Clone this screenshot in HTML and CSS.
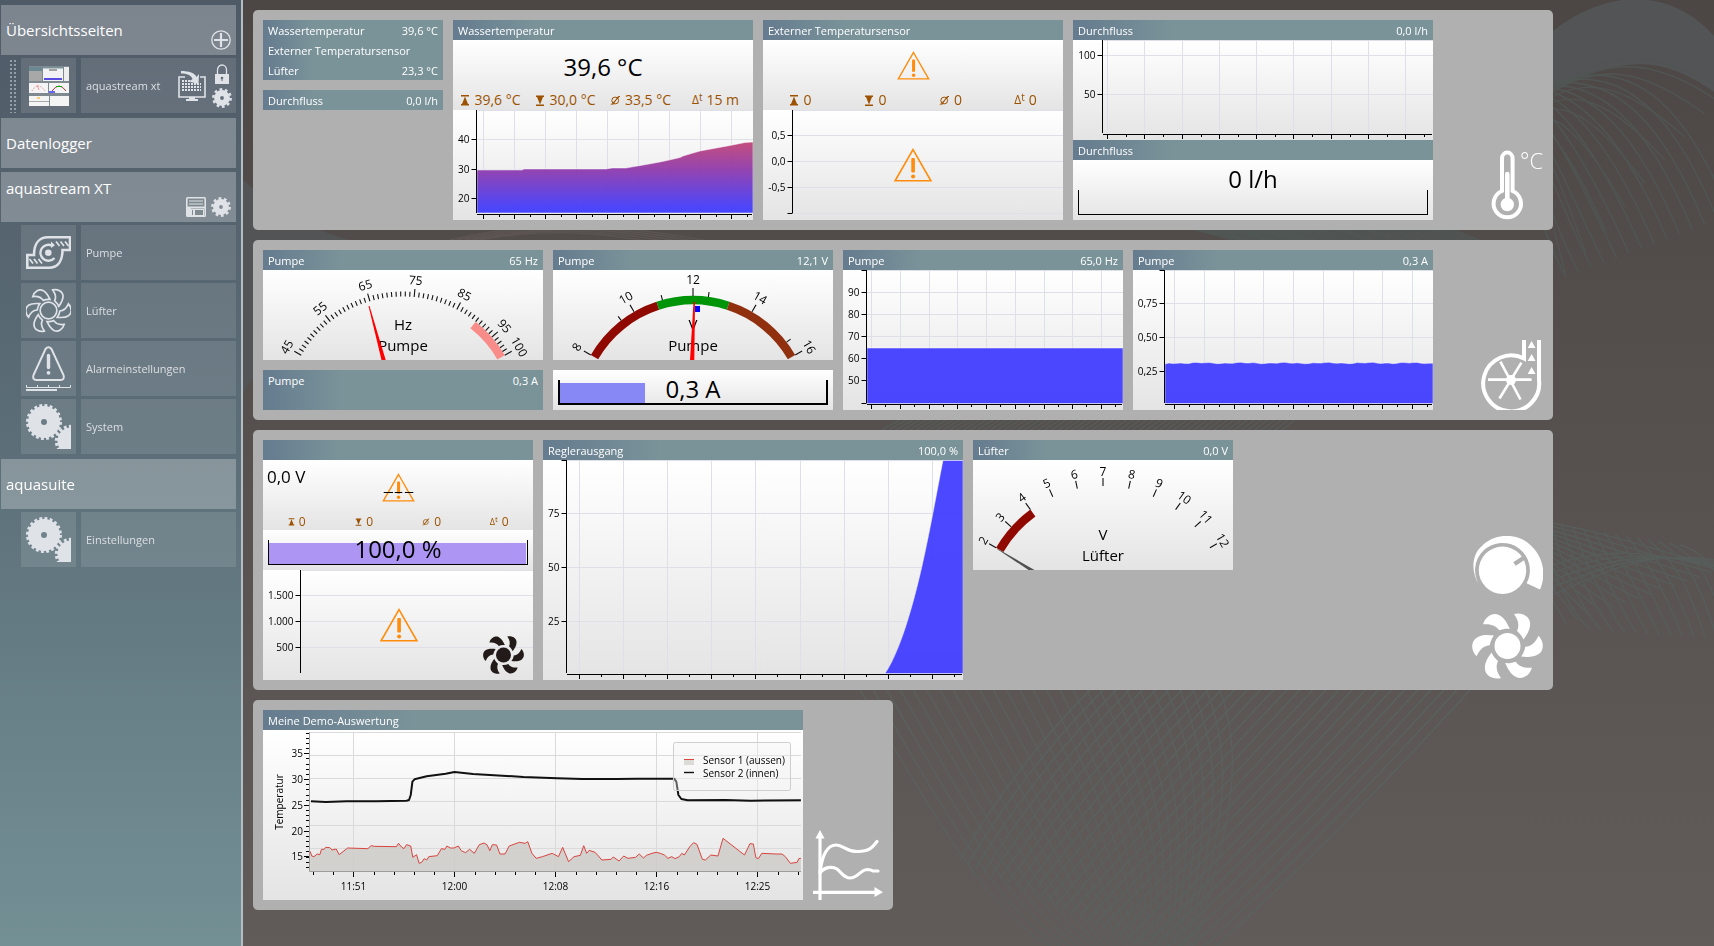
FILE: index.html
```html
<!DOCTYPE html>
<html lang="de">
<head>
<meta charset="utf-8">
<title>aquasuite</title>
<link rel="stylesheet" href="styles.css">
</head>
<body>
<svg class="backdrop" id="backdrop" viewBox="0 0 1714 946" preserveAspectRatio="xMidYMid slice" aria-hidden="true"></svg>

<svg class="symbols" aria-hidden="true">
  <symbol id="warn" viewBox="0 0 39 34">
    <path d="M19.5 1.6 37.4 32.8H1.6Z" fill="none" stroke="#ff8c0a" stroke-width="1.6"/>
    <rect x="17.8" y="10" width="3.6" height="14.5" rx="1" fill="#ff8c0a"/>
    <circle cx="19.6" cy="28.6" r="2" fill="#ff8c0a"/>
  </symbol>
  <symbol id="max" viewBox="0 0 10 11"><path d="M1 0h8v1.6H1ZM5 1.5 8 9H9v1.5H1V9H2Z" fill="#9c5200"/></symbol>
  <symbol id="min" viewBox="0 0 10 11"><path d="M1 11h8V9.4H1ZM5 9.5 8 2H9V.5H1V2H2Z" fill="#9c5200"/></symbol>
  <symbol id="avg" viewBox="0 0 11 11"><g fill="none" stroke="#9c5200"><circle cx="5.2" cy="5.5" r="3.4"/><path d="M.8 9.8 10 1M2.6 10 8.6 1"/></g></symbol>
  <symbol id="fan-solid" viewBox="-35.500 -34 71 68">
    <circle r="13"/>
    <g id="blades">
      <path id="blade" d="M6.500-32C14-34 22-30 22.600-23C23-16 19-11 16-6.500C14.500-10 12-13 9.500-15C12-20 11-26 6.500-32Z"/>
      <use href="#blade" transform="rotate(60)"/><use href="#blade" transform="rotate(120)"/><use href="#blade" transform="rotate(180)"/><use href="#blade" transform="rotate(240)"/><use href="#blade" transform="rotate(300)"/>
    </g>
  </symbol>
  <symbol id="gear" viewBox="0 0 20 20">
    <circle cx="10" cy="10" r="4.900" fill="none" stroke="#dfe3e8" stroke-width="6"/>
    <circle cx="10" cy="10" r="8.600" fill="none" stroke="#dfe3e8" stroke-width="2.600" stroke-dasharray="2.700 2.704"/>
  </symbol>
  <symbol id="gears" viewBox="0 0 45 45">
    <g fill="none" stroke="#dfe3e8">
      <circle cx="18" cy="18" r="9.500" stroke-width="13"/>
      <circle cx="18" cy="18" r="16.500" stroke-width="3" stroke-dasharray="2.880 2.303"/>
      <circle cx="45" cy="37" r="6.800" stroke-width="13.600"/>
      <circle cx="45" cy="37" r="14.600" stroke-width="3.200" stroke-dasharray="2.800 2.296"/>
    </g>
  </symbol>
</svg>

<div class="app">
  <nav class="sidebar" aria-label="Navigation">
    <section class="group">
      <h2 class="group-head"><a href="#seiten">Übersichtsseiten</a>
        <span class="tools"><button type="button" aria-label="Seite hinzufügen"><svg viewBox="0 0 20 20" width="20" height="20"><g fill="none" stroke="#dfe3e8"><circle cx="10" cy="10" r="9.200" stroke-width="1.300"/><path d="M10 3v14M3 10h14" stroke-width="2.200"/></g></svg></button></span>
      </h2>
      <div class="entry">
        <span class="grip"></span>
        <a class="entry-icon" href="#xt" aria-label="Vorschau aquastream xt">
          <svg viewBox="0 0 40 40" width="40" height="40">
            <rect width="40" height="40" fill="#7f8a90"/>
            <rect y="1" width="13" height="14" fill="#a8a8a8"/><rect y="1" width="13" height="4" fill="#6c8890"/>
            <rect x="14" y="1" width="20" height="14" fill="#f2f2f4"/><rect x="14" y="1" width="20" height="1.500" fill="#7a9399"/><rect x="15" y="12" width="18" height="2" fill="#5b4ce0"/><path d="M20 4h8" stroke="#555"/>
            <rect x="35" y="1" width="5" height="14" fill="#eee"/>
            <rect y="17" width="19" height="10" fill="#f4f4f4"/><path d="M3 25Q9 15 16 25" stroke="#d88" fill="none" stroke-dasharray="1 1"/><path d="M10 24 8 19" stroke="#e99"/>
            <rect x="20" y="17" width="20" height="10" fill="#f4f4f4"/><path d="M23 25Q30 15 37 25" stroke="#a33" fill="none"/><path d="M27 20.500h6" stroke="#1a1"/><rect x="20" y="25" width="6" height="2" fill="#66f"/>
            <rect y="30" width="20" height="10" fill="#f4f4f4"/><rect x="21" y="30" width="19" height="10" fill="#f4f4f4"/><path d="M0 35.500h20" stroke="#aaa"/><path d="M8 32h3" stroke="#fa0"/>
          </svg></a>
        <div class="entry-label split">
          <a href="#xt">aquastream xt</a>
          <button type="button" aria-label="Auf Desktop anzeigen"><svg viewBox="0 0 28 30" width="28" height="30"><path d="M7 6H1v20h26V6h-5" fill="none" stroke="#dfe3e8" stroke-width="1.600"/><path d="M4 10h13M4 13h19M4 16h19M4 19h19" stroke="#dfe3e8" stroke-width="2" stroke-dasharray="2 1"/><path d="M11 26h6v2h3v2H8v-2h3Z" fill="#dfe3e8"/><path d="M3 0C11 0 17 2 18.500 6L21 3 20.500 13 11 10.500 14.500 8C13 4 9 2.500 3 2.500Z" fill="#dfe3e8"/></svg></button>
          <span class="stack">
            <button type="button" aria-label="Sperren"><svg viewBox="0 0 14 20" width="14" height="20"><path d="M2.500 10V6a4.500 5 0 0 1 9 0v4" fill="none" stroke="#dfe3e8" stroke-width="1.300"/><path d="M0 10h14v10H0Z" fill="#dfe3e8"/><circle cx="7" cy="14" r="1.300" fill="#646e78"/><path d="M7 14v3" stroke="#646e78"/></svg></button>
            <button type="button" aria-label="Seite einstellen"><svg width="20" height="20"><use href="#gear"/></svg></button>
          </span>
        </div>
      </div>
    </section>
    <section class="group">
      <h2 class="group-head"><a href="#logger">Datenlogger</a></h2>
    </section>
    <section class="group">
      <h2 class="group-head top"><a href="#aquastream">aquastream XT</a>
        <span class="tools">
          <button type="button" aria-label="Speichern"><svg viewBox="0 0 20 20" width="20" height="20"><rect x=".8" y=".8" width="18.400" height="18.400" rx=".8" fill="#7f8990" stroke="#dfe3e8" stroke-width="1.600"/><path d="M3 4h14M3 7h14" stroke="#dfe3e8"/><path d="M1 9.500h18v2H1ZM1 11h4v8H1Z" fill="#dfe3e8"/><rect x="5.500" y="12.500" width="12" height="6" fill="none" stroke="#dfe3e8"/><path d="M8 13v5" stroke="#dfe3e8" stroke-width="2"/></svg></button>
          <button type="button" aria-label="Gerät einstellen"><svg width="20" height="20"><use href="#gear"/></svg></button>
        </span>
      </h2>
      <div class="entry">
        <span class="entry-icon"><svg viewBox="0 0 45 33" width="45" height="33"><g fill="none" stroke="#dfe3e8"><path d="M44 1.300H22C13 1.300 8 8 8 19H1.300V31.700H23C32 31.700 36.500 25 36.500 14H44Z" stroke-width="2.600"/><path d="M28.500 22A8 8 0 1 1 26 9.600" stroke-width="2.300"/><path d="M30 5.500 33.500 10M34.500 5.500 38 10M39 5.500 42.500 10M3.500 23 7 27.500M8 23 11.500 27.500M12.500 23 16 27.500" stroke-width="1.700"/></g><circle cx="22.300" cy="16.700" r="3.300" fill="#dfe3e8"/><path d="M25 5.500 29 9.200 25 12Z" fill="#dfe3e8"/></svg></span>
        <a class="entry-label" href="#pumpe">Pumpe</a>
      </div>
      <div class="entry">
        <span class="entry-icon"><svg viewBox="-35 -35 70 70" width="45" height="45"><g fill="none" stroke="#dfe3e8" stroke-width="2.600"><circle r="13"/><use href="#blades"/></g></svg></span>
        <a class="entry-label" href="#luefter">Lüfter</a>
      </div>
      <div class="entry">
        <span class="entry-icon"><svg viewBox="0 0 45 45" width="45" height="45"><path d="M19.500 3Q22.500-.5 25.500 3L37.500 29Q39 34 34.500 34H10.500Q6 34 7.500 29Z" fill="none" stroke="#dfe3e8" stroke-width="2"/><path d="M22.500 9.500v12" stroke="#dfe3e8" stroke-width="3.400" stroke-linecap="round"/><circle cx="22.500" cy="26.800" r="1.900" fill="#dfe3e8"/><path d="M.5 39v2.500h44V39M11.500 39v2.500M22.500 39v2.500M33.500 39v2.500" fill="none" stroke="#dfe3e8"/><path d="M0 44h31" stroke="#dfe3e8" stroke-width="2"/></svg></span>
        <a class="entry-label" href="#alarm">Alarmeinstellungen</a>
      </div>
      <div class="entry">
        <span class="entry-icon"><svg width="45" height="45"><use href="#gears"/></svg></span>
        <a class="entry-label" href="#system">System</a>
      </div>
    </section>
    <section class="group">
      <h2 class="group-head"><a href="#aquasuite">aquasuite</a></h2>
      <div class="entry">
        <span class="entry-icon"><svg width="45" height="45"><use href="#gears"/></svg></span>
        <a class="entry-label" href="#einstellungen">Einstellungen</a>
      </div>
    </section>
  </nav>

  <main class="board">
    <section class="panel">
      <div class="tile w180 spaced">
        <dl class="list">
          <div><dt>Wassertemperatur</dt><dd>39,6 °C</dd></div>
          <div><dt>Externer Temperatursensor</dt><dd></dd></div>
          <div><dt>Lüfter</dt><dd>23,3 °C</dd></div>
        </dl>
        <dl class="list"><div><dt>Durchfluss</dt><dd>0,0 l/h</dd></div></dl>
      </div>
      <div class="tile w300">
        <h3 class="bar-head"><span>Wassertemperatur</span></h3>
        <div class="reading">
          <p class="big">39,6 °C</p>
          <ul class="stats">
            <li><svg width="10" height="11"><use href="#max"/></svg>39,6 °C</li>
            <li><svg width="10" height="11"><use href="#min"/></svg>30,0 °C</li>
            <li><svg width="11" height="11"><use href="#avg"/></svg>33,5 °C</li>
            <li><span class="delta">Δ<sup>t</sup></span>15 m</li>
          </ul>
        </div>
        <svg class="plot" id="water" viewBox="0 0 300 110"></svg>
      </div>
      <div class="tile w300">
        <h3 class="bar-head"><span>Externer Temperatursensor</span></h3>
        <div class="reading">
          <svg class="alert" width="33" height="29"><use href="#warn"/></svg>
          <ul class="stats">
            <li><svg width="10" height="11"><use href="#max"/></svg>0</li>
            <li><svg width="10" height="11"><use href="#min"/></svg>0</li>
            <li><svg width="11" height="11"><use href="#avg"/></svg>0</li>
            <li><span class="delta">Δ<sup>t</sup></span>0</li>
          </ul>
        </div>
        <svg class="plot" id="external" viewBox="0 0 300 110"></svg>
      </div>
      <div class="tile w360">
        <h3 class="bar-head"><span>Durchfluss</span><span>0,0 l/h</span></h3>
        <svg class="plot" id="flow" viewBox="0 0 360 100"></svg>
        <h3 class="bar-head"><span>Durchfluss</span></h3>
        <div class="meter tall"><div class="track"></div><p class="big">0 l/h</p></div>
      </div>
      <div class="badges">
        <svg class="loose" viewBox="0 0 70 70" width="70" height="70"><g fill="none" stroke="#fff"><path d="M29 41V8.500a5.300 6 0 0 1 10.600 0V41A13.700 13.700 0 1 1 29 41Z" stroke-width="4"/><path d="M34.300 54V24" stroke-width="4.600" stroke-linecap="round"/></g><circle cx="34.300" cy="54.500" r="6.700" fill="#fff"/><text class="unit" x="47" y="19">°C</text></svg>
      </div>
    </section>

    <section class="panel">
      <div class="tile w280 spaced">
        <div>
          <h3 class="bar-head"><span>Pumpe</span><span>65 Hz</span></h3>
          <svg class="plot" id="gauge-hz" viewBox="0 0 280 90"></svg>
        </div>
        <dl class="list tall"><div><dt>Pumpe</dt><dd>0,3 A</dd></div></dl>
      </div>
      <div class="tile w280 spaced">
        <div>
          <h3 class="bar-head"><span>Pumpe</span><span>12,1 V</span></h3>
          <svg class="plot" id="gauge-v" viewBox="0 0 280 90"></svg>
        </div>
        <div class="meter thick"><div class="track"><div class="fill blue" style="width:32%"></div></div><p class="big">0,3 A</p></div>
      </div>
      <div class="tile w280">
        <h3 class="bar-head"><span>Pumpe</span><span>65,0 Hz</span></h3>
        <svg class="plot" id="pump-hz" viewBox="0 0 280 140"></svg>
      </div>
      <div class="tile w300">
        <h3 class="bar-head"><span>Pumpe</span><span>0,3 A</span></h3>
        <svg class="plot" id="pump-a" viewBox="0 0 300 140"></svg>
      </div>
      <div class="badges">
        <svg viewBox="0 0 70 70" width="70" height="70"><g fill="none" stroke="#fff"><path d="M51 0V18.500A28 28 0 1 0 66 40V0" stroke-width="4"/><path d="M15 39.600H58.600M27.400 21.600 47.500 59.500M48.400 22.600 26.500 58.500" stroke-width="2.600"/></g><circle cx="38" cy="40" r="5" fill="#fff"/><path d="M58.600 1 62.500 8H54.700ZM58.600 14 62.500 21H54.700ZM58.600 27 62.500 34H54.700Z" fill="#fff"/></svg>
      </div>
    </section>

    <section class="panel">
      <div class="tile w270">
        <h3 class="bar-head"></h3>
        <div class="reading small">
          <p class="corner">0,0 V</p>
          <svg class="alert" viewBox="0 0 39 34" width="33" height="29"><use href="#warn"/><path d="M2 23h11M15 23h9M27 23h10" stroke="#000" stroke-width="1.200"/></svg>
          <ul class="stats">
            <li><svg width="7" height="8"><use href="#max"/></svg>0</li>
            <li><svg width="7" height="8"><use href="#min"/></svg>0</li>
            <li><svg width="8" height="8"><use href="#avg"/></svg>0</li>
            <li><span class="delta">Δ<sup>t</sup></span>0</li>
          </ul>
        </div>
        <div class="meter"><div class="track"><div class="fill violet" style="width:99.5%"></div></div><p class="big">100,0 %</p></div>
        <svg class="plot" id="fan" viewBox="0 0 270 110"></svg>
      </div>
      <div class="tile w420">
        <h3 class="bar-head"><span>Reglerausgang</span><span>100,0 %</span></h3>
        <svg class="plot" id="control" viewBox="0 0 420 220"></svg>
      </div>
      <div class="tile w260">
        <h3 class="bar-head"><span>Lüfter</span><span>0,0 V</span></h3>
        <svg class="plot" id="gauge-fan" viewBox="0 0 260 110"></svg>
      </div>
      <div class="badges">
        <svg viewBox="0 0 70 58" width="70" height="58"><path d="M7 50C-3 36-1 18 9 10C21-3 43-3 55 7C70 19 74 37 67 53.500L53.600 47.300A27.400 27.400 0 1 0 7 50Z" fill="#fff"/><circle cx="29.500" cy="34.300" r="23.700" fill="#fff"/><path d="M41.500 28 52 21" stroke="#b0b0b0" stroke-width="4.400"/></svg>
        <svg width="71" height="68" fill="#fff"><use href="#fan-solid"/></svg>
      </div>
    </section>

    <section class="panel narrow">
      <div class="tile w540">
        <h3 class="bar-head"><span>Meine Demo-Auswertung</span></h3>
        <svg class="plot" id="demo" viewBox="0 0 540 170"></svg>
      </div>
      <div class="badges">
        <svg viewBox="0 0 70 70" width="70" height="70"><g fill="none" stroke="#fff" stroke-width="3.200"><path d="M7 6V70M0 62.300H64"/><path d="M7 42C9 27 13 15 23 15C31 15 33 22 45 21.500C56 21.500 59 18 64 11.500M7 43C11 37 19 36 24 39C30 44 31 48 37 48C45 48 47 40 54 39.500Q58 39.500 60 41H65" stroke-linecap="round"/></g><path d="M7 0 11.600 8.500H2.400ZM70 62.300 61.500 57V67Z" fill="#fff"/></svg>
      </div>
    </section>
  </main>
</div>
<script src="script.js"></script>
</body>
</html>
```
FILE: styles.css
```css
* { box-sizing: border-box; }

body {
  margin: 0;
  min-height: 100vh;
  background: linear-gradient(#4c4745, #615c5a) fixed;
  font-family: "Open Sans", "Noto Sans", sans-serif;
  font-size: 11px;
  color: #000;
}

h2, h3, p, ul, dl, dd { margin: 0; padding: 0; font-weight: 400; }
ul { list-style: none; }
a { color: inherit; text-decoration: none; }
svg { display: block; }
button { display: block; padding: 0; border: 0; background: none; cursor: pointer; }

.symbols { position: absolute; width: 0; height: 0; }
.backdrop { position: fixed; inset: 0; width: 100%; height: 100%; z-index: -1; }

.app { display: flex; min-height: 100vh; }

/* Sidebar */
.sidebar {
  flex: 0 0 243px;
  padding: 5px 5px 0 1px;
  border-right: 2px solid #b4bdc3;
  background: linear-gradient(#4f5a67, #5b6d77 45%, #739095);
}
.group + .group { margin-top: 4px; }
.entry:last-child { margin-bottom: 5px; }
.group-head {
  display: flex;
  justify-content: space-between;
  align-items: center;
  height: 50px;
  padding: 0 5px;
  background: rgba(255, 255, 255, .26);
  color: #fff;
  font-size: 15px;
  line-height: 22px;
}
.group-head.top { align-items: flex-start; padding-top: 5px; }
.tools { display: flex; gap: 5px; align-self: flex-end; padding-bottom: 5px; }
.entry {
  display: flex;
  gap: 5px;
  margin-top: 3px;
  padding-left: 20px;
  position: relative;
}
.entry-icon {
  display: flex;
  flex: 0 0 55px;
  height: 55px;
  align-items: center;
  justify-content: center;
  background: rgba(255, 255, 255, .11);
}
.entry-label {
  display: flex;
  flex: 1;
  align-items: center;
  padding: 0 4px 0 5px;
  background: rgba(255, 255, 255, .11);
  color: #dcdfe2;
}
.split { gap: 6px; }
.split a { flex: 1; }
.stack { display: flex; flex-direction: column; align-items: center; gap: 4px; }
.grip {
  position: absolute;
  left: 7px;
  top: 2px;
  bottom: 0;
  width: 8px;
  background: conic-gradient(from 90deg at 2px 2px, transparent 270deg, #93a0a7 0) 0 0 / 4px 4px;
}

/* Board */
.board {
  flex: 1;
  display: flex;
  flex-direction: column;
  align-items: flex-start;
  gap: 10px;
  padding: 10px;
  min-width: 0;
}
.panel {
  display: flex;
  align-items: flex-start;
  gap: 10px;
  width: 100%;
  max-width: 1300px;
  padding: 10px;
  border-radius: 5px;
  background: #b0b0b0;
}
.panel.narrow { max-width: 640px; }
.badges {
  display: flex;
  flex-direction: column;
  align-items: flex-end;
  gap: 18px;
  align-self: flex-end;
  margin-left: auto;
}
.loose { overflow: visible; }
.unit { font-size: 22px; font-weight: 300; fill: #fff; }

.tile { min-width: 0; }
.spaced { display: flex; flex-direction: column; gap: 10px; }
.w180 { flex: 0 1 180px; }
.w260 { flex: 0 1 260px; }
.w270 { flex: 0 1 270px; }
.w280 { flex: 0 1 280px; }
.w300 { flex: 0 1 300px; }
.w360 { flex: 0 1 360px; }
.w420 { flex: 0 1 420px; }
.w540 { flex: 0 1 540px; }

.bar-head, .list { background: linear-gradient(90deg, #657b8f, #7a9399 28%); color: #fff; }
.bar-head, .list div {
  display: flex;
  justify-content: space-between;
  gap: 4px;
  height: 20px;
  padding: 0 5px;
  font-size: 11px;
  line-height: 22px;
  white-space: nowrap;
}
.list.tall { height: 40px; }

.plot, .reading, .meter { background: linear-gradient(#fff, #e4e4e4); }
.plot { width: 100%; height: auto; }
.plot text { font-size: 10px; }
.plot .scale { font-size: 12px; text-anchor: middle; }
.plot .caption { font-size: 15px; text-anchor: middle; }

.reading {
  display: grid;
  grid-template-rows: 1fr 20px;
  height: 70px;
  position: relative;
}
.big { font-size: 24px; line-height: 30px; text-align: center; white-space: nowrap; }
.reading .big { padding-top: 12px; }
.alert { align-self: center; justify-self: center; }
.corner { position: absolute; left: 4px; top: 4px; font-size: 17px; line-height: 26px; }
.stats {
  display: grid;
  grid-template-columns: repeat(4, 1fr);
  font-size: 14px;
  line-height: 20px;
  color: #9c5200;
}
.stats li { display: flex; align-items: center; justify-content: center; gap: 4px; white-space: nowrap; }
.reading.small { grid-template-rows: 1fr 16px; }
.small .stats { font-size: 12px; line-height: 16px; }
.delta { font-size: 12px; line-height: 12px; }
.delta sup { font-size: 10px; line-height: 0; vertical-align: 3px; }
.small .delta { font-size: 9px; }
.small .delta sup { font-size: 8px; }

.meter { display: grid; height: 40px; padding: 10px 5px 5px; }
.meter > * { grid-area: 1 / 1; }
.meter .big { align-self: start; line-height: 18px; }
.meter.tall { height: 60px; padding-top: 4px; }
.meter.tall .track { margin-top: 26px; }
.meter.tall .big { line-height: 30px; }
.track { padding-top: 3px; border: solid #000; border-width: 0 1px 1px; }
.thick .track { border-width: 0 2px 2px; }
.fill { height: 100%; }
.blue { background: #8787f6; }
.violet { background: #ad96f3; }
```
FILE: script.js
```js
const NS = 'http://www.w3.org/2000/svg';

function add(parent, name, attrs, text) {
  const node = document.createElementNS(NS, name);
  for (const key in attrs) node.setAttribute(key, attrs[key]);
  if (text !== undefined) node.textContent = text;
  parent.appendChild(node);
  return node;
}

function range(start, step, end) {
  const list = [];
  for (let v = start; v < end; v += step) list.push(v);
  return list;
}

const crisp = v => Math.floor(v) + 0.5;

/* Line chart: axis at x, baseline at bottom, y ticks as [y, label] */
function chart(id, o) {
  const svg = document.getElementById(id);
  const width = svg.viewBox.baseVal.width;
  const majors = o.first === undefined ? [] : range(o.first, o.step, width).map(crisp);
  let grid = '';
  majors.forEach(x => { grid += `M${x} 0V${o.bottom}`; });
  o.ticks.forEach(t => { grid += `M${o.x + 1} ${t[0]}H${width}`; });
  grid += `M${o.x + 1} .5H${width}`;
  add(svg, 'path', { d: grid, stroke: '#dfdfe8', fill: 'none' });
  if (o.area) {
    add(svg, 'path', { d: o.area, fill: o.fill || '#3c38ff', 'fill-opacity': .92, stroke: '#fff', 'stroke-opacity': .6, 'stroke-width': .8 });
  }
  let axis = `M${o.x} 0V${o.bottom - 1.5}`;
  o.ticks.forEach(t => {
    axis += `M${o.x} ${t[0]}h-5`;
    if (t[1]) add(svg, 'text', { x: o.x - 7, y: t[0] + 3, 'text-anchor': 'end' }, t[1]);
  });
  if (majors.length) {
    axis += `M${o.x + .5} ${o.bottom}H${width - 1}`;
    majors.forEach(x => {
      axis += `M${x} ${o.bottom}v4.500`;
      const minor = crisp(x + o.step / 2);
      if (minor < width) axis += `M${minor} ${o.bottom}v2.500`;
    });
  }
  add(svg, 'path', { d: axis, stroke: '#000', fill: 'none' });
  return svg;
}

/* Dial spanning 120 degrees between min and max */
function gauge(id, o) {
  const svg = document.getElementById(id);
  const deg = v => -60 + (v - o.min) / (o.max - o.min) * 120;
  const at = (v, r) => {
    const a = deg(v) * Math.PI / 180;
    return (o.cx + r * Math.sin(a)).toFixed(2) + ' ' + (o.cy - r * Math.cos(a)).toFixed(2);
  };
  o.bands.forEach(([from, to, color]) => {
    add(svg, 'path', { d: `M${at(from, o.r)}A${o.r} ${o.r} 0 0 1 ${at(to, o.r)}L${at(to, o.r - 8.5)}A${o.r - 8.5} ${o.r - 8.5} 0 0 0 ${at(from, o.r - 8.5)}Z`, fill: color });
  });
  let d = '';
  o.minor.forEach(v => { d += `M${at(v, o.r)}L${at(v, o.r + 5)}`; });
  o.major.forEach(v => { d += `M${at(v, o.r)}L${at(v, o.r + 8)}`; });
  add(svg, 'path', { d, stroke: '#111', 'stroke-width': 1.1, fill: 'none' });
  o.major.forEach(v => {
    add(svg, 'text', { class: 'scale', transform: `translate(${at(v, o.label)}) rotate(${deg(v)})`, y: 4 }, v);
  });
  add(svg, 'text', { class: 'caption', x: o.cx, y: o.base - 21 }, o.unit);
  add(svg, 'text', { class: 'caption', x: o.cx, y: o.base }, o.name);
  if (o.marker) add(svg, 'rect', { x: o.marker[0], y: o.marker[1], width: 5, height: 6, fill: '#00f' });
  add(svg, 'polygon', { points: o.needle, fill: o.color });
}

/* Evenly spaced curves between two cubic beziers */
function sheaf(svg, a, b, count, stroke) {
  let d = '';
  for (let i = 0; i < count; i++) {
    const p = a.map((v, k) => (v + (b[k] - v) * i / (count - 1)).toFixed(1));
    d += `M${p[0]} ${p[1]}C${p.slice(2).join(' ')}`;
  }
  add(svg, 'path', { d, stroke, fill: 'none', 'stroke-width': 1.4 });
}

const back = document.getElementById('backdrop');
add(back, 'path', { d: 'M243 180C254 190 300 228 350 240L350 380C300 380 260 350 243 395Z', fill: '#535456' });
add(back, 'path', { d: 'M1540 42C1600-14 1670-14 1714 36V92C1660 54 1620 54 1540 98Z', fill: '#535455' });
sheaf(back, [1540, 98, 1610, 40, 1665, 55, 1724, 90], [1530, 130, 1530, 150, 1550, 210, 1566, 277], 9, '#505553');
sheaf(back, [1540, 98, 1610, 50, 1665, 60, 1730, 110], [1500, 170, 1540, 200, 1550, 250, 1566, 277], 2, '#505553');
sheaf(back, [1540, 90, 1620, 50, 1680, 90, 1730, 215], [1500, 80, 1520, 150, 1540, 230, 1566, 277], 14, '#505654');
sheaf(back, [1540, 521, 1600, 530, 1660, 552, 1724, 568], [1530, 560, 1545, 590, 1560, 610, 1566, 625], 14, '#575d5b');
sheaf(back, [1680, 545, 1700, 552, 1720, 560, 1740, 640], [1540, 521, 1550, 560, 1560, 600, 1590, 630], 14, '#575d5b');
sheaf(back, [1540, 600, 1600, 575, 1650, 545, 1724, 562], [1540, 570, 1600, 545, 1660, 550, 1724, 572], 5, '#575d5b');
sheaf(back, [860, 690, 960, 860, 1010, 946, 1090, 960], [1220, 690, 1240, 750, 1240, 800, 1190, 960], 28, '#5b605e');
sheaf(back, [1090, 690, 1050, 730, 1000, 790, 960, 860], [1470, 690, 1370, 800, 1290, 880, 1190, 970], 30, '#5a625f');
sheaf(back, [450, 240, 560, 215, 620, 225, 760, 250], [480, 240, 560, 225, 620, 235, 700, 250], 5, '#5b5452');
sheaf(back, [1180, 225, 1210, 235, 1240, 240, 1260, 250], [1440, 225, 1460, 232, 1480, 240, 1500, 250], 50, '#505654');
sheaf(back, [900, 420, 890, 425, 880, 430, 870, 440], [1300, 415, 1290, 425, 1280, 430, 1270, 440], 60, '#555b59');

const water = document.getElementById('water');
const fade = add(water, 'linearGradient', { id: 'heat', gradientUnits: 'userSpaceOnUse', x1: 0, x2: 0, y1: 30, y2: 103 });
add(fade, 'stop', { offset: 0, 'stop-color': '#c4406f' });
add(fade, 'stop', { offset: .4, 'stop-color': '#8d36aa' });
add(fade, 'stop', { offset: .95, 'stop-color': '#3c38ff' });

chart('water', {
  x: 23.5, bottom: 104.5, first: 30, step: 31, fill: 'url(#heat)',
  ticks: [[29.5, '40'], [59.5, '30'], [88.5, '20']],
  area: 'M24 103V60H69L71 59H153L159 58H173C190 55 210 52 227 47.500L230 46 240 43 247 41 277 35.500 292 32.500 300 32V103Z'
});
const external = chart('external', { x: 29.5, bottom: 104.5, ticks: [[25.5, '0,5'], [51.5, '0,0'], [77.5, '-0,5'], [103.5, '']] });
add(external, 'use', { href: '#warn', x: 130.5, y: 38, width: 39, height: 34 });
chart('flow', { x: 29.5, bottom: 94.5, first: 34.5, step: 37.25, ticks: [[15.5, '100'], [54.5, '50']] });

chart('pump-hz', {
  x: 23.5, bottom: 134.5, first: 28.5, step: 28.75,
  ticks: [[.5, ''], [22.5, '90'], [44.5, '80'], [66.5, '70'], [88.5, '60'], [110.5, '50'], [133.5, '']],
  area: 'M24 133.500V78H280V133.500Z'
});
let ripple = 'M32 133.500V94';
range(36, 4, 300).forEach((x, i) => { ripple += `L${x} ${(93 + Math.sin(i * 1.7) * .4 + Math.sin(i * .6) * .4).toFixed(1)}`; });
chart('pump-a', {
  x: 31.5, bottom: 134.5, first: 41.5, step: 29.75,
  ticks: [[.5, ''], [33.5, '0,75'], [67.5, '0,50'], [101.5, '0,25']],
  area: ripple + 'H300V133.500Z'
});

const fan = chart('fan', { x: 37.5, bottom: 104.5, ticks: [[25.5, '1.500'], [51.5, '1.000'], [77.5, '500']] });
add(fan, 'use', { href: '#warn', x: 116.5, y: 38, width: 39, height: 34 });
add(fan, 'use', { href: '#fan-solid', x: 220, y: 65, width: 41, height: 40, fill: '#221b19' });

chart('control', {
  x: 23.5, bottom: 214.5, first: 36.5, step: 44.12,
  ticks: [[.5, ''], [53.5, '75'], [107.5, '50'], [161.5, '25']],
  area: 'M342 213.500C360 187 374 128 379 106C388 66 396 20 400 .5H420V213.500Z'
});

gauge('gauge-hz', {
  cx: 140, cy: 144, r: 117.5, label: 134, min: 45, max: 100, base: 81,
  minor: range(45, 1, 101), major: [45, 55, 65, 75, 85, 95, 100],
  bands: [[90, 100, '#f88c88']], unit: 'Hz', name: 'Pumpe',
  needle: '105.5,36 118.5,90 122.7,90 106.5,36', color: '#f00'
});
gauge('gauge-v', {
  cx: 140, cy: 144, r: 118, label: 134, min: 8, max: 16, base: 81,
  minor: [9.5, 11, 12.5, 15.5], major: [8, 10, 12, 14, 16],
  bands: [[8, 10.8, '#8f0900'], [10.8, 13.2, '#009409'], [13.2, 16, '#91300f']], unit: 'V', name: 'Pumpe',
  marker: [142, 36], needle: '140.5,32 137,90 141.3,90 142,32', color: '#f00'
});
gauge('gauge-fan', {
  cx: 130, cy: 149.5, r: 123.5, label: 138, min: 2, max: 12, base: 101,
  minor: [], major: [2, 3, 4, 5, 6, 7, 8, 9, 10, 11, 12],
  bands: [[2, 4, '#8f0900']], unit: 'V', name: 'Lüfter',
  needle: '24,89 55.5,110 61.5,110 25,89', color: '#505050'
});

/* Recorded log of both sensors */
const demo = document.getElementById('demo');
const hours = [[90.5, '11:51'], [191.5, '12:00'], [292.5, '12:08'], [393.5, '12:16'], [494.5, '12:25']];
let net = '';
hours.forEach(h => { net += `M${h[0]} 3V141`; });
[2.5, 25.5, 48.5, 71.5, 95.5, 118.5].forEach(y => { net += `M47 ${y}H538`; });
add(demo, 'path', { d: net, stroke: '#dadada', fill: 'none' });
const series = add(demo, 'svg', { x: 0, y: 0, width: 540, height: 170, viewBox: '31 120 1283 510', preserveAspectRatio: 'none' });
const outside = '143,484 147,498 152,500 160,492 166,494 170,478 176,478 180,472 190,473 195,480 205,477 212,494 232,474 280,476 288,467 296,469 348,470 353,460 360,471 366,476 372,464 382,468 387,502 396,494 402,520 408,517 414,506 420,510 425,500 445,497 455,476 463,478 468,468 476,474 485,474 495,468 502,482 512,488 522,478 533,490 545,464 556,459 563,464 570,482 576,464 586,465 594,492 606,492 616,468 640,457 654,460 660,455 670,490 680,505 695,500 718,490 733,500 743,472 757,515 770,500 785,496 793,467 800,490 806,481 820,487 828,498 836,510 858,508 863,501 877,513 888,498 898,505 916,502 925,492 935,504 942,496 955,490 965,487 975,490 985,495 993,505 1002,500 1010,506 1020,500 1026,490 1032,495 1045,470 1054,458 1062,463 1075,508 1082,510 1095,495 1112,498 1124,445 1175,495 1188,461 1196,462 1202,503 1208,506 1216,490 1250,492 1264,492 1272,500 1284,520 1300,517 1304,506 1309,505';
const inside = '145,334 180,336 230,334 300,334 372,332 378,330 382,315 386,275 391,268 420,259 465,251 486,246 530,252 600,257 650,261 730,265 790,267 870,267 920,266 1008,266 1013,275 1018,315 1025,327 1040,331 1130,330 1190,332 1309,331';
add(series, 'polygon', { points: '143,543 ' + outside + ' 1309,543', fill: '#c9c8c4', 'fill-opacity': .75 });
add(series, 'polyline', { points: outside, fill: 'none', stroke: '#d9453f', 'vector-effect': 'non-scaling-stroke' });
add(series, 'polyline', { points: inside, fill: 'none', stroke: '#111', 'stroke-width': 2, 'vector-effect': 'non-scaling-stroke', 'stroke-linejoin': 'round' });
add(demo, 'path', { d: 'M46.500 2V141.500H538', stroke: '#9c9c9c', fill: 'none' });
let marks = '';
range(3, 5.17, 140).forEach(y => { marks += `M46 ${crisp(y)}h-3`; });
[[23, '35'], [49, '30'], [75, '25'], [101, '20'], [126, '15']].forEach(t => {
  marks += `M46 ${crisp(t[0])}h-5`;
  add(demo, 'text', { x: 40, y: t[0] + 4, 'text-anchor': 'end' }, t[1]);
});
range(50.5, 20.2, 538).forEach(x => { marks += `M${crisp(x)} 142v3`; });
hours.forEach(h => {
  marks += `M${h[0]} 142v5`;
  add(demo, 'text', { x: h[0], y: 160, 'text-anchor': 'middle' }, h[1]);
});
add(demo, 'path', { d: marks, stroke: '#000', fill: 'none' });
add(demo, 'text', { transform: 'translate(20 72) rotate(-90)', 'text-anchor': 'middle' }, 'Temperatur');
add(demo, 'rect', { x: 410.5, y: 12.5, width: 117, height: 48, rx: 2, fill: '#f4f4f4', 'fill-opacity': .35, stroke: '#cfcfcf' });
add(demo, 'rect', { x: 421, y: 30, width: 10, height: 5, fill: '#dcdbd7' });
add(demo, 'path', { d: 'M421 29.500h10', stroke: '#d9453f' });
add(demo, 'path', { d: 'M421 42.500h10', stroke: '#111', 'stroke-width': 1.4 });
add(demo, 'text', { x: 440, y: 34 }, 'Sensor 1 (aussen)');
add(demo, 'text', { x: 440, y: 47 }, 'Sensor 2 (innen)');
```
